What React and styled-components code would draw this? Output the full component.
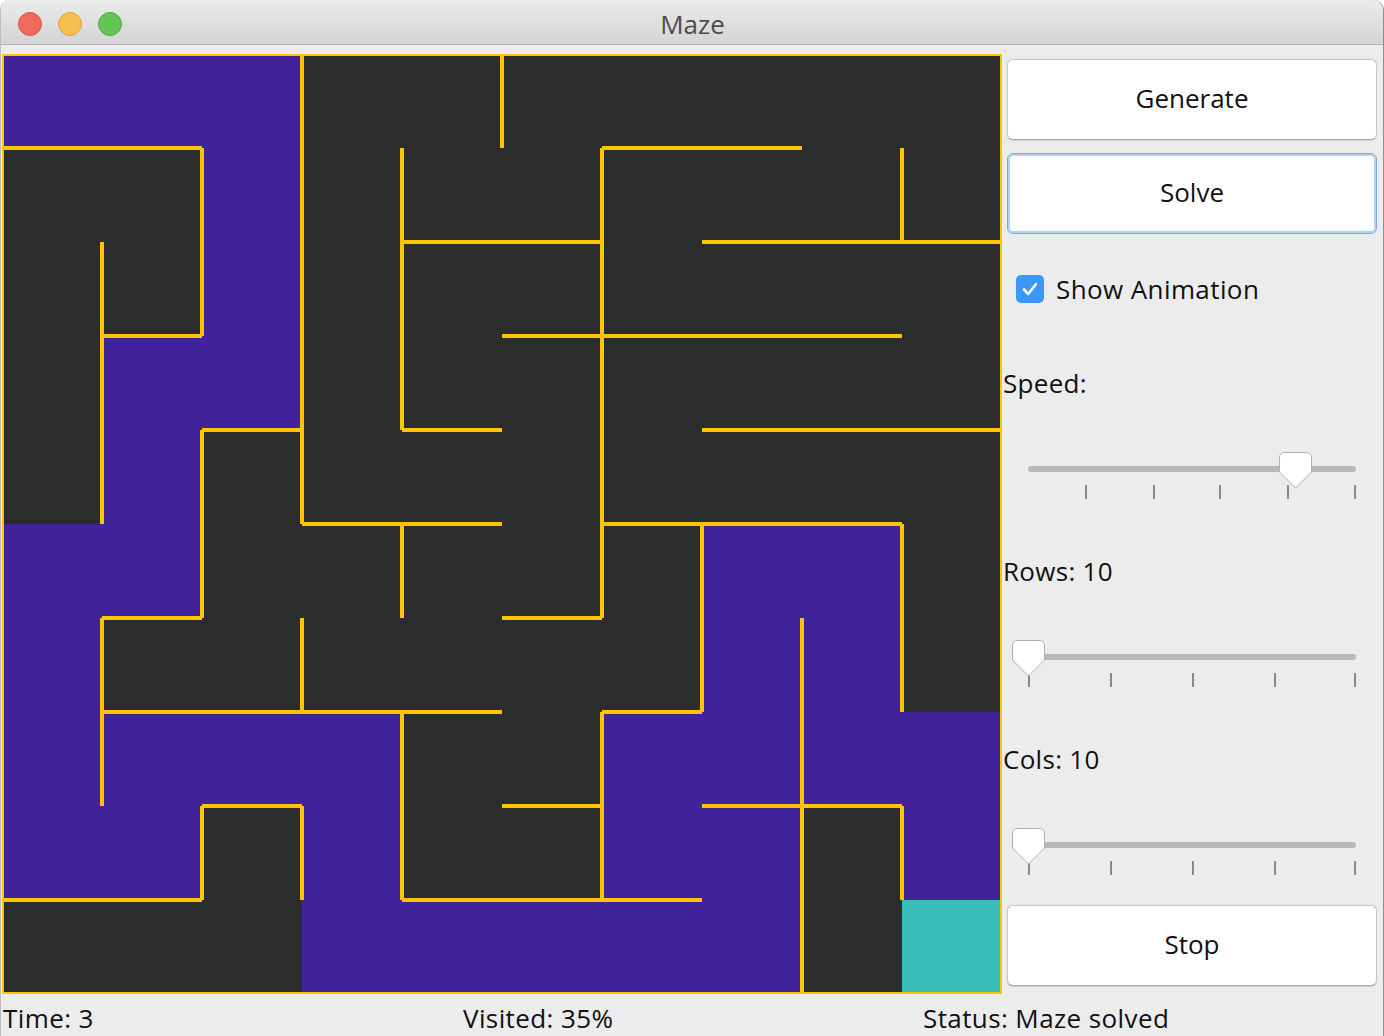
import React from 'react';
import styled, { createGlobalStyle } from 'styled-components';

const GlobalStyle = createGlobalStyle`
  html, body {
    margin: 0;
    padding: 0;
    background: #ffffff;
  }
  body {
    font-family: 'Open Sans', 'DejaVu Sans', sans-serif;
  }
`;

// maze model: P = visited, D = untouched, T = goal
const CELLS = [
  'PPPDDDDDDD',
  'DDPDDDDDDD',
  'DDPDDDDDDD',
  'DPPDDDDDDD',
  'DPDDDDDDDD',
  'PPDDDDDPPD',
  'PDDDDDDPPD',
  'PPPPDDPPPP',
  'PPDPDDPPDP',
  'DDDPPPPPDT'
];

const CELL_COLORS = { P: '#42249a', D: '#2b2d2c', T: '#38bdb8' };

// [row boundary, fromCol, toCol]
const H_WALLS = [
  [0, 0, 10], [10, 0, 10],
  [1, 0, 2], [1, 6, 8],
  [2, 4, 6], [2, 7, 10],
  [3, 1, 2], [3, 5, 9],
  [4, 2, 3], [4, 4, 5], [4, 7, 10],
  [5, 3, 5], [5, 6, 9],
  [6, 1, 2], [6, 5, 6],
  [7, 1, 5], [7, 6, 7],
  [8, 2, 3], [8, 5, 6], [8, 7, 9],
  [9, 0, 2], [9, 4, 7]
];

// [col boundary, fromRow, toRow]
const V_WALLS = [
  [0, 0, 10], [10, 0, 10],
  [1, 2, 5], [1, 6, 8],
  [2, 1, 3], [2, 4, 6], [2, 8, 9],
  [3, 0, 5], [3, 6, 7], [3, 8, 9],
  [4, 1, 4], [4, 5, 6], [4, 7, 9],
  [5, 0, 1],
  [6, 1, 6], [6, 7, 9],
  [7, 5, 7],
  [8, 6, 10],
  [9, 1, 2], [9, 5, 7], [9, 8, 9]
];

const CW = 100;
const CH = 94;

const Window = styled.div`
  box-sizing: border-box;
  width: 1384px;
  height: 1036px;
  display: flex;
  flex-direction: column;
  background: #ececec;
  border-left: 1px solid #bdbdbd;
  border-right: 1px solid #8e8e8e;
  border-radius: 10px 10px 0 0;
  overflow: hidden;
  color: #111;
  font-size: 26px;
`;

const TitleBar = styled.div`
  flex: none;
  height: 45px;
  display: grid;
  grid-template-columns: 1fr auto 1fr;
  align-items: center;
  padding: 3px 16px 0 17px;
  box-sizing: border-box;
  background: linear-gradient(#ebebeb, #d4d4d4);
  border-bottom: 1px solid #b1b1b1;
  border-radius: 10px 10px 0 0;
`;

const Lights = styled.div`
  display: flex;
  gap: 16px;
`;

const Light = styled.span`
  width: 22px;
  height: 22px;
  border-radius: 50%;
  background: ${p => p.$fill};
  border: 1px solid ${p => p.$edge};
`;

const Title = styled.div`
  color: #4d4d4d;
  font-size: 26px;
  line-height: 40px;
`;

const Body = styled.div`
  flex: none;
  display: flex;
  padding: 9px 1px 0;
  height: 940px;
`;

const Board = styled.svg`
  display: block;
  flex: none;
  width: 1000px;
  height: 940px;
  shape-rendering: crispEdges;
`;

const Side = styled.div`
  flex: none;
  width: 380px;
  display: grid;
  grid-template-rows: repeat(10, 94px);
`;

const Button = styled.button`
  margin: 5px 5px 8px;
  padding: 0 0 4px;
  border-radius: 6px;
  background: #fff;
  border: 1px solid ${p => (p.$focused ? '#78a9ee' : '#c6c6c6')};
  border-bottom-color: ${p => (p.$focused ? '#78a9ee' : '#a8a8a8')};
  box-shadow: ${p => (p.$focused ? 'inset 0 0 0 2px #b3d0f6' : '0 0.5px 1px rgba(0,0,0,0.12)')};
  font-family: 'Open Sans', 'DejaVu Sans', sans-serif;
  font-size: 26px;
  color: #111;
`;

const CheckRow = styled.label`
  display: flex;
  align-items: center;
  gap: 12px;
  padding-left: 14px;
  letter-spacing: 0.4px;
`;

const Box = styled.span`
  width: 28px;
  height: 28px;
  border-radius: 5px;
  background: #3a98fc;
  display: flex;
  align-items: center;
  justify-content: center;
`;

const Label = styled.div`
  display: flex;
  align-items: center;
  padding-left: 1px;
  letter-spacing: 0.3px;
`;

const SliderRow = styled.div`
  padding: 36px 26px 0;
`;

const Track = styled.div`
  position: relative;
  height: 6px;
  border-radius: 3px;
  background: #b9b9b9;
`;

const Tick = styled.span`
  position: absolute;
  top: 19px;
  width: 2px;
  height: 14px;
  margin-left: -1px;
  background: #8a8a8a;
`;

const Thumb = styled.svg`
  position: absolute;
  top: -14px;
  width: 33px;
  height: 37px;
  margin-left: -16px;
`;

const StatusBar = styled.div`
  flex: none;
  height: 42px;
  display: grid;
  grid-template-columns: repeat(3, 1fr);
  padding: 6px 1px 0;
  box-sizing: border-box;
`;

const Status = styled.div`
  line-height: 36px;
  padding-left: 1px;
  letter-spacing: 0.4px;
`;

function Maze() {
  return (
    <Board viewBox="0 0 1000 940">
      {CELLS.map((row, r) =>
        row.split('').map((k, c) => (
          <rect key={`${r}-${c}`} x={c * CW} y={r * CH} width={CW} height={CH} fill={CELL_COLORS[k]} />
        ))
      )}
      <g stroke="#ffc400" strokeWidth="4" strokeLinecap="butt">
        {H_WALLS.map(([r, a, b], i) => (
          <line key={`h${i}`} x1={a * CW} x2={b * CW} y1={r * CH} y2={r * CH} />
        ))}
        {V_WALLS.map(([c, a, b], i) => (
          <line key={`v${i}`} x1={c * CW} x2={c * CW} y1={a * CH} y2={b * CH} />
        ))}
      </g>
    </Board>
  );
}

function Slider({ value, ticks }) {
  return (
    <SliderRow>
      <Track>
        {ticks.map(t => (
          <Tick key={t} style={{ left: `${t * 100}%` }} />
        ))}
        <Thumb viewBox="0 0 33 37" style={{ left: `${value * 100}%` }}>
          <path
            d="M6 0.5 H27 Q32.5 0.5 32.5 6 V20 L16.5 36 L0.5 20 V6 Q0.5 0.5 6 0.5 Z"
            fill="#fff"
            stroke="#b0b0b0"
          />
        </Thumb>
      </Track>
    </SliderRow>
  );
}

const SPEED_TICKS = [0.178, 0.385, 0.586, 0.793, 0.997];
const SIZE_TICKS = [0.003, 0.253, 0.503, 0.753, 0.997];

export default function App() {
  return (
    <>
      <GlobalStyle />
      <Window>
        <TitleBar>
          <Lights>
            <Light $fill="#ee6a5f" $edge="#d4574c" />
            <Light $fill="#f5bf4f" $edge="#d9a441" />
            <Light $fill="#62c554" $edge="#52a944" />
          </Lights>
          <Title>Maze</Title>
          <span />
        </TitleBar>
        <Body>
          <Maze />
          <Side>
            <Button>Generate</Button>
            <Button $focused>Solve</Button>
            <CheckRow>
              <Box>
                <svg width="20" height="20" viewBox="0 0 20 20">
                  <path d="M4 10.5 L8.2 15 L16 5" fill="none" stroke="#fff" strokeWidth="2.6" strokeLinecap="round" strokeLinejoin="round" />
                </svg>
              </Box>
              Show Animation
            </CheckRow>
            <Label>Speed:</Label>
            <Slider value={0.814} ticks={SPEED_TICKS} />
            <Label>Rows: 10</Label>
            <Slider value={0} ticks={SIZE_TICKS} />
            <Label>Cols: 10</Label>
            <Slider value={0} ticks={SIZE_TICKS} />
            <Button>Stop</Button>
          </Side>
        </Body>
        <StatusBar>
          <Status>Time: 3</Status>
          <Status>Visited: 35%</Status>
          <Status>Status: Maze solved</Status>
        </StatusBar>
      </Window>
    </>
  );
}
